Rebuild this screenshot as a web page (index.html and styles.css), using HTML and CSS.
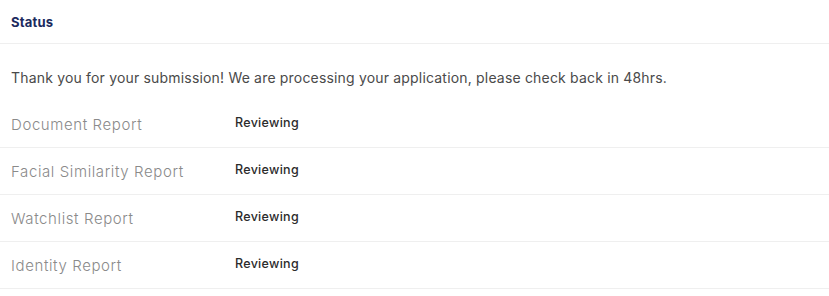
FILE: index.html
```html
<!DOCTYPE html>
<html lang="en">
<head>
<meta charset="utf-8">
<title>Status</title>
<link rel="stylesheet" href="styles.css">
</head>
<body>
<section class="panel">
  <header class="panel-header">
    <h2 class="panel-title">Status</h2>
  </header>
  <p class="message">Thank you for your submission! We are processing your application, please check back in 48hrs.</p>
  <ul class="reports">
    <li class="report-row"><span class="report-name">Document Report</span><span class="report-status">Reviewing</span></li>
    <li class="report-row"><span class="report-name">Facial Similarity Report</span><span class="report-status">Reviewing</span></li>
    <li class="report-row"><span class="report-name">Watchlist Report</span><span class="report-status">Reviewing</span></li>
    <li class="report-row"><span class="report-name">Identity Report</span><span class="report-status">Reviewing</span></li>
  </ul>
</section>
</body>
</html>
```

FILE: styles.css
```css
* { box-sizing: border-box; }
html, body {
  margin: 0;
  padding: 0;
  background: #ffffff;
}
body {
  font-family: Inter, "Open Sans", "DejaVu Sans", sans-serif;
  color: #444;
}
.panel {
  width: 100%;
}
.panel-header {
  height: 44px;
  display: flex;
  align-items: center;
  padding: 0 11px;
  border-bottom: 1px solid #efefef;
}
.panel-title {
  margin: 0;
  font-size: 13px;
  font-weight: 700;
  letter-spacing: 0.2px;
  color: #1c2b5e;
}
.message {
  margin: 0;
  height: 57px;
  display: flex;
  align-items: center;
  padding: 10px 11px 0;
  font-size: 14px;
  font-weight: 400;
  letter-spacing: 0.18px;
  color: #4a4a4a;
}
.reports {
  list-style: none;
  margin: 0;
  padding: 0;
}
.report-row {
  height: 47px;
  display: flex;
  align-items: center;
  padding: 0 11px;
  border-bottom: 1px solid #efefef;
}
.report-name {
  width: 224px;
  flex: none;
  font-size: 15px;
  font-weight: 300;
  letter-spacing: 0.6px;
  color: #8a8a8a;
}
.report-status {
  font-size: 12.5px;
  font-weight: 500;
  letter-spacing: 0.3px;
  color: #2b2b2b;
  margin-top: -4px;
}
```
